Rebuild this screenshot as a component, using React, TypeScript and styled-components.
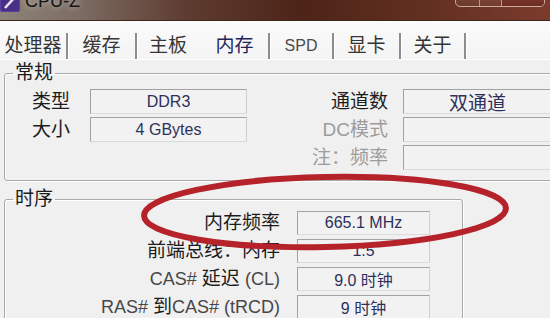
import React from "react";
import styled, { createGlobalStyle } from "styled-components";

const FONT = `"Liberation Sans", "Noto Sans CJK SC", sans-serif`;

const Global = createGlobalStyle`
  html, body { margin: 0; padding: 0; background: #f0f0f0; }
  body { font-family: ${FONT}; }
  * { box-sizing: border-box; }
`;

const Window = styled.div`
  position: relative;
  width: 550px;
  height: 318px;
  overflow: hidden;
  background: #f0f0f0;
  display: flex;
  flex-direction: column;
  font-family: ${FONT};
`;

const TitleBar = styled.div`
  flex: 0 0 21px;
  display: flex;
  align-items: flex-start;
  padding-right: 5px;
  background: linear-gradient(
    90deg,
    #8e8479 0%,
    #7d6d63 14%,
    #5e3b30 34%,
    #4d2418 55%,
    #62301f 78%,
    #7b3b2d 100%
  );
  border-bottom: 1px solid #3b2620;
`;

const AppIcon = styled.svg`
  flex: 0 0 auto;
  width: 20px;
  height: 20px;
  margin-top: -8px;
`;

const TitleText = styled.div`
  margin-top: -10px;
  margin-left: 5px;
  font-size: 18px;
  line-height: 22px;
  color: #141414;
  text-shadow: 0 0 6px rgba(255, 255, 255, 0.55);
`;

const Spacer = styled.div`
  flex: 1;
`;

const WinButtons = styled.div`
  display: flex;
  height: 20px;
  margin-top: -13px;
  border: 1px solid rgba(235, 210, 200, 0.75);
  border-radius: 0 0 5px 5px;
  overflow: hidden;
`;

const WinButton = styled.div<{ $w: number; $close?: boolean }>`
  width: ${(p) => p.$w}px;
  height: 100%;
  border-right: ${(p) => (p.$close ? "none" : "1px solid rgba(235, 210, 200, 0.6)")};
  background: ${(p) =>
    p.$close
      ? "linear-gradient(#8a4034, #6d2c22)"
      : "linear-gradient(rgba(255,255,255,0.12), rgba(255,255,255,0.03))"};
`;

const TabStrip = styled.div`
  flex: 0 0 39px;
  display: flex;
  align-items: flex-start;
  padding-top: 12px;
  background: linear-gradient(#fbfbfb, #f4f4f4);
  border-bottom: 1px solid #ffffff;
`;

const Tab = styled.div<{ $w: number; $active?: boolean; $sep?: boolean; $small?: boolean }>`
  flex: 0 0 ${(p) => p.$w}px;
  height: 26px;
  display: flex;
  align-items: center;
  justify-content: center;
  font-size: ${(p) => (p.$small ? "16px" : "19px")};
  line-height: 26px;
  color: ${(p) => (p.$active ? "#1e2458" : p.$small ? "#4a4a4a" : "#353535")};
  border-right: 2px solid ${(p) => (p.$sep ? "#8d8d8d" : "transparent")};
  box-shadow: ${(p) => (p.$sep ? "1px 0 0 #ffffff" : "none")};
`;

const Panel = styled.div`
  flex: 1;
  display: flex;
  flex-direction: column;
  padding-left: 4px;
`;

const Group = styled.fieldset<{ $w: number; $mt: number; $pt: number }>`
  flex: 0 0 auto;
  width: ${(p) => p.$w}px;
  margin: ${(p) => p.$mt}px 0 0 0;
  padding: ${(p) => p.$pt}px 0 10px 8px;
  border: 1px solid #a9a9a9;
  border-radius: 3px;
  box-shadow: inset 1px 1px 0 #ffffff, 1px 1px 0 #ffffff;
  min-width: 0;
`;

const Legend = styled.legend`
  padding: 0 2px;
  font-size: 19px;
  line-height: 22px;
  color: #1a1a1a;
`;

const GeneralRow = styled.div`
  display: flex;
  align-items: flex-start;
`;

const FieldGrid = styled.div<{ $label: number; $field: number; $gap: number; $ml?: number; $rowH: number; $rowGap: number }>`
  display: grid;
  grid-template-columns: ${(p) => p.$label}px ${(p) => p.$field}px;
  grid-auto-rows: ${(p) => p.$rowH}px;
  column-gap: ${(p) => p.$gap}px;
  row-gap: ${(p) => p.$rowGap}px;
  margin-left: ${(p) => p.$ml ?? 0}px;
`;

const Label = styled.div<{ $dim?: boolean }>`
  text-align: right;
  white-space: nowrap;
  font-size: 19px;
  line-height: 24px;
  align-self: center;
  color: ${(p) => (p.$dim ? "#9c9c9c" : "#1c1c1c")};
`;

const Lat = styled.span`
  font-size: 18px;
  color: #474747;
`;

const Field = styled.div<{ $cjk?: boolean }>`
  display: flex;
  align-items: center;
  justify-content: center;
  border: 1px solid;
  border-color: #a2a2a2 #cfcfcf #dadada #a2a2a2;
  background: #f2f2f2;
  color: #2e305c;
  font-size: ${(p) => (p.$cjk ? "19px" : "16px")};
  white-space: nowrap;
`;

const Overlay = styled.svg`
  position: absolute;
  left: 0;
  top: 0;
  width: 550px;
  height: 318px;
  pointer-events: none;
`;

const tabs = [
  { t: "处理器", w: 68, sep: true },
  { t: "缓存", w: 69, sep: true },
  { t: "主板", w: 64, sep: false },
  { t: "内存", w: 69, sep: true, active: true },
  { t: "SPD", w: 64, sep: true, small: true },
  { t: "显卡", w: 67, sep: true },
  { t: "关于", w: 65, sep: true },
];

export default function App() {
  return (
    <Window>
      <Global />
      <TitleBar>
        <AppIcon viewBox="0 0 20 20">
          <rect x="0" y="0" width="20" height="20" rx="2" fill="#5b3f9c" />
          <rect x="1" y="1" width="18" height="18" rx="2" fill="#4a2f88" />
          <path d="M5 16 L15 5" stroke="#e9e4f5" strokeWidth="2.5" fill="none" />
        </AppIcon>
        <TitleText>CPU-Z</TitleText>
        <Spacer />
        <WinButtons>
          <WinButton $w={24} />
          <WinButton $w={22} />
          <WinButton $w={42} $close />
        </WinButtons>
      </TitleBar>

      <TabStrip>
        {tabs.map((tab) => (
          <Tab key={tab.t} $w={tab.w} $sep={tab.sep} $active={tab.active} $small={tab.small}>
            {tab.t}
          </Tab>
        ))}
      </TabStrip>

      <Panel>
        <Group $w={600} $mt={2} $pt={5}>
          <Legend>常规</Legend>
          <GeneralRow>
            <FieldGrid $label={57} $field={157} $gap={20} $rowH={25} $rowGap={3}>
              <Label>类型</Label>
              <Field>DDR3</Field>
              <Label>大小</Label>
              <Field>4 GBytes</Field>
            </FieldGrid>
            <FieldGrid $label={100} $field={149} $gap={15} $ml={41} $rowH={25} $rowGap={3}>
              <Label>通道数</Label>
              <Field $cjk>双通道</Field>
              <Label $dim>DC模式</Label>
              <Field />
              <Label $dim>注：频率</Label>
              <Field />
            </FieldGrid>
          </GeneralRow>
        </Group>

        <Group $w={459} $mt={7} $pt={1}>
          <Legend>时序</Legend>
          <FieldGrid $label={267} $field={133} $gap={17} $rowH={24} $rowGap={4}>
            <Label>内存频率</Label>
            <Field>665.1 MHz</Field>
            <Label>前端总线：内存</Label>
            <Field>1:5</Field>
            <Label>
              <Lat>CAS# </Lat>延迟 <Lat>(CL)</Lat>
            </Label>
            <Field>9.0 时钟</Field>
            <Label>
              <Lat>RAS# </Lat>到<Lat>CAS# (tRCD)</Lat>
            </Label>
            <Field>9 时钟</Field>
          </FieldGrid>
        </Group>
      </Panel>

      <Overlay viewBox="0 0 550 318">
        <ellipse
          cx="325"
          cy="212"
          rx="181"
          ry="35"
          transform="rotate(-1.2 325 212)"
          fill="none"
          stroke="#b5222a"
          strokeWidth="6"
        />
      </Overlay>
    </Window>
  );
}
